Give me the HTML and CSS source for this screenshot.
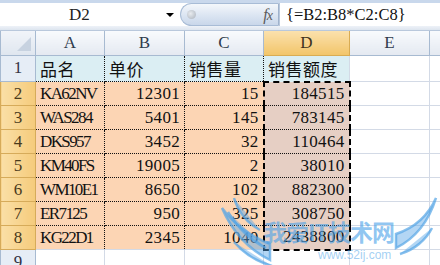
FILE: index.html
```html
<!DOCTYPE html>
<html lang="zh">
  <head>
    <meta charset="UTF-8" />
    <meta name="viewport" content="width=device-width, initial-scale=1.0" />
    <title>Excel</title>
    <link rel="stylesheet" href="styles.css">
  </head>
  <body>
    <div class="sheet">
      <div class="formula-bar">
        <div class="name-box">
          <span class="cell-ref">D2</span>
          <span class="drop"></span>
        </div>
        <div class="pill">
          <span class="knob"></span>
          <span class="fx">f<em>x</em></span>
        </div>
        <div class="formula">{=B2:B8*C2:C8}</div>
      </div>
      <div class="bar-gap"></div>

      <table class="grid">
        <colgroup>
          <col style="width:35px" />
          <col style="width:69px" />
          <col style="width:80px" />
          <col style="width:79px" />
          <col style="width:86px" />
          <col style="width:80px" />
          <col style="width:20px" />
        </colgroup>
        <thead>
          <tr>
            <th class="corner"><span class="tri"></span></th>
            <th>A</th>
            <th>B</th>
            <th>C</th>
            <th class="col-on">D</th>
            <th>E</th>
            <th></th>
          </tr>
        </thead>
        <tbody id="rows">
          <tr>
            <th class="rh">1</th>
            <td class="title cjk">品名</td>
            <td class="title cjk">单价</td>
            <td class="title cjk">销售量</td>
            <td class="title cjk">销售额度</td>
            <td></td>
            <td></td>
          </tr>
        </tbody>
      </table>

      <div class="watermark">
        <svg class="wing wing-l" width="56" height="80" viewBox="0 0 56 80">
          <path d="M50 74 C34 66 14 50 2 22 C14 38 30 50 50 58 Z" />
          <path d="M46 62 C30 54 18 42 8 26" />
          <path d="M52 80 C38 76 26 70 14 56" />
          <path d="M40 44 C28 38 18 26 14 12" />
        </svg>
        <span class="wm-text">我爱IT技术网</span>
        <span class="wm-url">www.52ij.com</span>
        <svg class="wing wing-r" width="48" height="64" viewBox="0 0 48 64">
          <path d="M4 54 C20 46 36 30 44 4 C36 22 22 34 4 40 Z" />
          <path d="M8 60 C22 56 34 46 40 34" />
        </svg>
      </div>
    </div>

    <script>
      const data = [
        ["KA62NV", 12301, 15],
        ["WAS284", 5401, 145],
        ["DKS957", 3452, 32],
        ["KM40FS", 19005, 2],
        ["WM10E1", 8650, 102],
        ["ER7125", 950, 325],
        ["KG22D1", 2345, 1040],
      ];
      const rows = document.getElementById("rows");
      data.forEach((item, i) => {
        const tr = document.createElement("tr");
        let sel = "sel";
        if (i === 0) sel += " sel-top";
        if (i === data.length - 1) sel += " sel-bottom";
        tr.innerHTML = `
          <th class="rh row-on">${i + 2}</th>
          <td class="data name">${item[0]}</td>
          <td class="data num">${item[1]}</td>
          <td class="data num">${item[2]}</td>
          <td class="data num ${sel}">${item[1] * item[2]}</td>
          <td></td>
          <td></td>
        `;
        rows.appendChild(tr);
      });
      const last = document.createElement("tr");
      last.innerHTML = `<th class="rh">9</th><td></td><td></td><td></td><td></td><td></td><td></td>`;
      rows.appendChild(last);
    </script>
  </body>
</html>
```

FILE: styles.css
```css
* {
  box-sizing: border-box;
}
body {
  margin: 0;
  background-color: #fff;
  overflow: hidden;
  font-family: "Liberation Serif", "Noto Sans CJK SC", serif;
}
.sheet {
  position: relative;
  width: 440px;
  height: 265px;
  overflow: hidden;
}

/* formula bar */
.formula-bar {
  display: flex;
  height: 26px;
  border-top: 3px solid #c9d8ec;
  background-color: #fff;
}
.bar-gap {
  height: 5px;
  background: linear-gradient(#eef2f8, #dde5ef);
  border-bottom: 1px solid #b9c8dc;
}
.name-box {
  width: 180px;
  display: flex;
  align-items: center;
  padding-left: 69px;
}
.cell-ref {
  font-size: 17px;
  color: #222;
  width: 95px;
}
.drop {
  width: 0;
  height: 0;
  border-left: 4px solid transparent;
  border-right: 4px solid transparent;
  border-top: 4px solid #000;
  margin-left: 2px;
}
.pill {
  width: 99px;
  display: flex;
  align-items: center;
  justify-content: space-between;
  padding: 0 6px 0 6px;
  border: 1px solid #a8bcd6;
  border-right-color: #9fb2cc;
  border-radius: 12px 0 0 12px;
  background: linear-gradient(#f4f7fb, #dbe5f2 55%, #c9d7ea);
}
.knob {
  width: 9px;
  height: 9px;
  border-radius: 50%;
  background: radial-gradient(circle at 40% 40%, #e8ebef, #a9b1bb);
}
.fx {
  font-style: italic;
  font-size: 16px;
  color: #5b5b5b;
  letter-spacing: -1px;
}
.fx em {
  font-size: 14px;
}
.formula {
  flex: 1;
  display: flex;
  align-items: center;
  padding-left: 6px;
  font-size: 16.5px;
  color: #111;
  border-left: 1px solid #b9c8dc;
}

/* grid */
.grid {
  border-collapse: collapse;
  table-layout: fixed;
  width: 449px;
}
.grid th,
.grid td {
  height: 24px;
  padding: 0 4px;
  border: 1px solid #d3dae6;
  font-family: "Liberation Serif", "Noto Sans CJK SC", serif;
  font-size: 17px;
  font-weight: normal;
  white-space: nowrap;
  overflow: visible;
}
.grid thead th {
  color: #2f3b4c;
  text-align: center;
  background: linear-gradient(#f8fafd, #e4e9f1);
  border: 1px solid #a7bad1;
  border-top: none;
}
.grid thead th.col-on {
  background: linear-gradient(#fbe1ad, #f2c56a);
  border-color: #d9ac53;
  color: #3d3220;
}
.grid th.corner {
  position: relative;
  background: linear-gradient(#f1f4f9, #dfe6ef);
}
.tri {
  position: absolute;
  right: 4px;
  bottom: 4px;
  width: 0;
  height: 0;
  border-left: 14px solid transparent;
  border-bottom: 14px solid #c7d2e0;
}
.grid th.rh {
  color: #334;
  text-align: center;
  background-color: #e6edf6;
  border: 1px solid #a7bad1;
}
.grid th.rh.row-on {
  background: linear-gradient(90deg, #fadfa6, #f5cb7b);
  border-color: #d6ab5a;
  color: #4a3a1c;
}
.grid td.data {
  background-color: #fcd5b4;
  color: #111;
  border: 1px dotted #111;
}
.grid td.name {
  letter-spacing: -1.6px;
}
.grid td.num {
  text-align: right;
  letter-spacing: 0.3px;
}
.grid td.title {
  background-color: #dbeef3;
  border: 1px dotted #111;
  color: #111;
}
.grid td.cjk {
  font-family: "Noto Sans CJK SC", sans-serif;
  letter-spacing: 0.5px;
}
.grid td.sel {
  background-color: #e6cfc4;
  border-left: 2px dashed #000;
  border-right: 2px dashed #000;
}
.grid td.sel-top {
  border-top: 2px dashed #000;
}
.grid td.sel-bottom {
  border-bottom: 2px dashed #000;
}

/* watermark */
.watermark {
  position: absolute;
  left: 220px;
  top: 186px;
  width: 220px;
  height: 79px;
  pointer-events: none;
}
.wing {
  position: absolute;
  fill: rgba(86, 165, 230, 0.45);
  stroke: rgba(86, 165, 230, 0.7);
  stroke-width: 2.5;
}
.wing-l {
  left: 0;
  top: 0;
}
.wing-r {
  right: 0;
  top: 8px;
}
.wm-text {
  position: absolute;
  left: 44px;
  top: 28px;
  font-family: "Noto Sans CJK SC", sans-serif;
  font-weight: bold;
  font-size: 23px;
  color: rgba(70, 160, 232, 0.6);
  letter-spacing: -1px;
}
.wm-url {
  position: absolute;
  left: 98px;
  top: 62px;
  font-family: "Liberation Sans", sans-serif;
  font-size: 12px;
  color: rgba(70, 160, 232, 0.5);
}
```
